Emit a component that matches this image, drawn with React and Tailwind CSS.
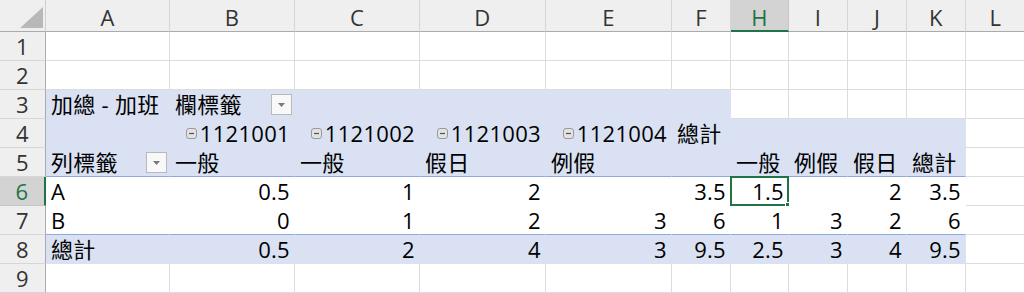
import * as React from "react";

const COLS = ["A", "B", "C", "D", "E", "F", "H", "I", "J", "K", "L"];
const WIDTHS = [
  "w-[124px]",
  "w-[125px]",
  "w-[125px]",
  "w-[126px]",
  "w-[126px]",
  "w-[59px]",
  "w-[58px]",
  "w-[59px]",
  "w-[59px]",
  "w-[59px]",
  "w-[60px]",
];

// cell helpers: g = plain grid cell, p = pivot blue, w = pivot white
const G = () => ({ k: "g" });
const P = (t = "", o = {}) => ({ k: "p", t, ...o });
const W = (t = "", o = {}) => ({ k: "w", t, ...o });

const blank = () => COLS.map(() => G());

const ROWS = [
  blank(),
  blank(),
  [P("加總 - 加班"), P("欄標籤", { dd: true }), P(), P(), P(), P(), G(), G(), G(), G(), G()],
  [
    P(),
    P("1121001", { c: true, a: "r" }),
    P("1121002", { c: true, a: "r" }),
    P("1121003", { c: true, a: "r" }),
    P("1121004", { c: true, a: "r" }),
    P("總計"),
    P(),
    P(),
    P(),
    P(),
    G(),
  ],
  [
    P("列標籤", { dd: true, line: true }),
    P("一般", { line: true }),
    P("一般", { line: true }),
    P("假日", { line: true }),
    P("例假", { line: true }),
    P("", { line: true }),
    P("一般", { line: true }),
    P("例假", { line: true }),
    P("假日", { line: true }),
    P("總計", { line: true }),
    G(),
  ],
  [
    W("A"),
    W("0.5", { a: "r" }),
    W("1", { a: "r" }),
    W("2", { a: "r" }),
    W(),
    W("3.5", { a: "r" }),
    W("1.5", { a: "r", sel: true }),
    W(),
    W("2", { a: "r" }),
    W("3.5", { a: "r" }),
    G(),
  ],
  [
    W("B", { line: true }),
    ...["0", "1", "2", "3", "6", "1", "3", "2", "6"].map((t) => W(t, { a: "r", line: true })),
    G(),
  ],
  [
    P("總計"),
    ...["0.5", "2", "4", "3", "9.5", "2.5", "3", "4", "9.5"].map((t) => P(t, { a: "r" })),
    G(),
  ],
  blank(),
];

function DropButton() {
  return (
    <div className="ml-auto mr-[2px] flex h-[21px] w-[21px] shrink-0 items-center justify-center border border-[#b9b9b9] bg-[#f8f8f8]">
      <svg width="7" height="4" viewBox="0 0 7 4" className="mt-[2px]">
        <path d="M0 0h7L3.5 4z" fill="#777" />
      </svg>
    </div>
  );
}

function CollapseIcon() {
  return (
    <svg width="11" height="11" viewBox="0 0 11 11" className="mr-[3px] shrink-0">
      <rect x="0.5" y="0.5" width="10" height="10" rx="2.5" fill="#e2e2e2" stroke="#9a9a9a" />
      <path d="M3 5.5h5" stroke="#555" strokeWidth="1.2" />
    </svg>
  );
}

function Cell({ cell, width }) {
  let cls = "";
  if (cell.k === "g") cls = "bg-white border-r border-b border-[#dcdcdc]";
  else if (cell.k === "p") cls = "bg-[#d9e1f2] border-r border-b border-r-transparent";
  else cls = "bg-white border-r border-b border-r-transparent";
  if (cell.k !== "g") cls += cell.line ? " border-b-[#8ea9db]" : " border-b-transparent";

  return (
    <div
      className={`relative flex h-full shrink-0 items-center overflow-visible whitespace-nowrap ${width} ${cls} ${
        cell.a === "r" ? "justify-end pr-[4px]" : "pl-[5px]"
      }`}
    >
      {cell.c && <CollapseIcon />}
      {cell.t && <span>{cell.t}</span>}
      {cell.dd && <DropButton />}
      {cell.sel && (
        <div className="absolute -left-[1px] -top-[1px] h-[30px] w-[59px] border-2 border-[#217346]">
          <div className="absolute -bottom-[4px] -right-[4px] h-[6px] w-[6px] border border-white bg-[#217346]" />
        </div>
      )}
    </div>
  );
}

export default function App() {
  return (
    <div className="h-[293px] w-[1024px] overflow-hidden bg-white font-['Open_Sans','Noto_Sans_CJK_TC',sans-serif] text-[22px] tracking-[0.3px] text-black">
      <div className="flex h-[32px]">
        <div className="flex w-[46px] shrink-0 items-end justify-end border-r border-b border-r-[#d0d0d0] border-b-[#ababab] bg-[#efefef] pb-[3px] pr-[2px]">
          <svg width="23" height="21" viewBox="0 0 23 21">
            <path d="M23 0V21H0z" fill="#b8b8b8" />
          </svg>
        </div>
        {COLS.map((c, i) =>
          c === "H" ? (
            <div
              key={c}
              className={`flex shrink-0 items-center justify-center border-r border-b-2 border-r-[#c6c6c6] border-b-[#217346] bg-[#d3d3d3] pt-[4px] text-[#217346] ${WIDTHS[i]}`}
            >
              {c}
            </div>
          ) : (
            <div
              key={c}
              className={`flex shrink-0 items-center justify-center border-r border-b border-r-[#d6d6d6] border-b-[#ababab] bg-[#efefef] pt-[4px] text-[#333] ${WIDTHS[i]}`}
            >
              {c}
            </div>
          )
        )}
      </div>
      {ROWS.map((row, r) => (
        <div key={r} className="flex h-[29px]">
          {r === 5 ? (
            <div className="flex w-[46px] shrink-0 items-center justify-center border-r-2 border-b border-r-[#217346] border-b-[#c6c6c6] bg-[#d3d3d3] text-[#217346]">
              {r + 1}
            </div>
          ) : (
            <div className="flex w-[46px] shrink-0 items-center justify-center border-r border-b border-r-[#ababab] border-b-[#d6d6d6] bg-[#efefef] text-[#333]">
              {r + 1}
            </div>
          )}
          {row.map((cell, i) => (
            <Cell key={i} cell={cell} width={WIDTHS[i]} />
          ))}
        </div>
      ))}
    </div>
  );
}
